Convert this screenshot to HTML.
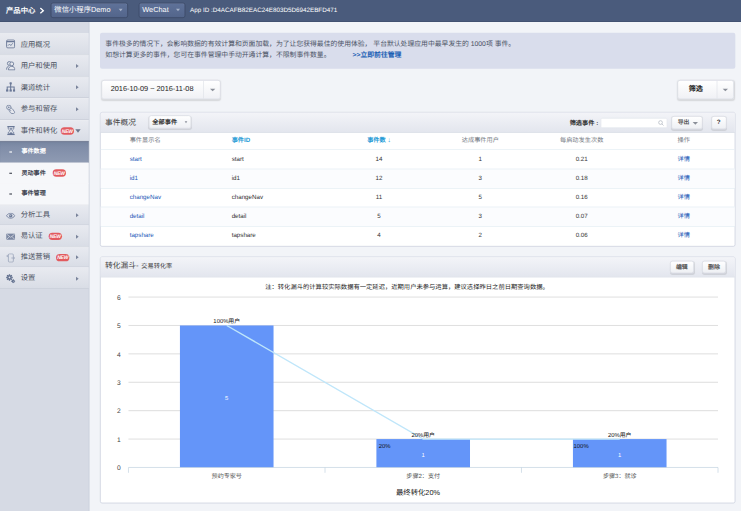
<!DOCTYPE html>
<html lang="zh-CN">
<head>
<meta charset="utf-8">
<title>事件数据</title>
<style>
html,body{margin:0;padding:0;}
body{width:741px;height:511px;overflow:hidden;background:#f2f4f8;font-family:"Liberation Sans",sans-serif;}
#root{text-rendering:geometricPrecision;position:absolute;left:0;top:0;width:1112px;height:767px;transform:scale(0.66667);transform-origin:0 0;background:#f2f4f8;color:#333;font-size:12px;overflow:hidden;}
#root *{box-sizing:border-box;}
.abs{position:absolute;}
/* header */
#hdr{position:absolute;left:0;top:0;width:1112px;height:33px;background:#4a5b7c;border-bottom:1px solid #3f4e6c;}
#hdr .crumb{position:absolute;left:9px;top:8px;color:#fff;font-weight:bold;font-size:11px;line-height:16px;white-space:nowrap;}
.hsel{position:absolute;top:3.5px;height:23px;border:1px solid #3a4763;border-radius:3.5px;background:linear-gradient(#5f7299,#53658b);color:#fff;font-size:11px;line-height:21px;padding-left:5px;white-space:nowrap;box-shadow:inset 0 1px 0 rgba(255,255,255,.15);}
.hsel i{position:absolute;right:7px;top:8.5px;width:0;height:0;border-left:3.5px solid transparent;border-right:3.5px solid transparent;border-top:4px solid #a6b2c8;}
#appid{position:absolute;left:285px;top:9px;color:#fff;font-size:9.45px;line-height:14px;white-space:nowrap;}
/* sidebar */
#side{position:absolute;left:0;top:33px;width:134px;height:734px;background:#d6dae4;border-right:1px solid #c9ceda;}
.mi{position:absolute;left:0;width:133px;background:linear-gradient(#e8eaf0,#d9dde6);border-top:1px solid #f2f3f7;border-bottom:1px solid #c9ced8;color:#4a5160;font-size:11px;}
.mi .t{position:absolute;left:31px;top:0;white-space:nowrap;}
.mi .ar{position:absolute;left:114px;width:0;height:0;border-top:3.7px solid transparent;border-bottom:3.7px solid transparent;border-left:4.3px solid #7a849b;}
.mi .dn{position:absolute;left:113px;width:0;height:0;border-left:4px solid transparent;border-right:4px solid transparent;border-top:5px solid #6c768c;}
.mi svg{position:absolute;left:9px;}
.si{position:absolute;left:0;width:133px;background:#f6f7fa;color:#3f4450;font-size:9.1px;font-weight:bold;}
.si.on{background:linear-gradient(#75849f,#808da8 25%,#8f9bb3);color:#fff;box-shadow:inset 0 1px 1px rgba(60,70,95,.35);}
.si .d{position:absolute;left:13.5px;top:15px;width:4.6px;height:2px;opacity:.85;background:currentColor;font-size:0;overflow:hidden;}
.si .t{position:absolute;left:32.2px;white-space:nowrap;}
.new{position:absolute;width:20px;height:11px;border-radius:6px;background:#e25b5f;color:#fff;font-size:7.5px;font-weight:bold;font-style:italic;line-height:11px;text-align:center;letter-spacing:-0.3px;}
/* main */
#info{position:absolute;left:150px;top:49px;width:953px;height:54px;background:#d9ddec;border-radius:3px;color:#4a5264;font-size:10.24px;line-height:16.6px;padding:10px 0 0 8px;white-space:nowrap;}
#info a{color:#1a5fb4;font-weight:bold;text-decoration:none;margin-left:33px;}
.btn{position:absolute;border:1px solid #d4d8e0;border-radius:4px;background:linear-gradient(#ffffff,#f0f1f5);box-shadow:0 1px 2px rgba(0,0,0,.12);color:#222;white-space:nowrap;}
.panel{position:absolute;left:149.5px;width:953.5px;border:1px solid #c4cad9;border-radius:3px;background:#fff;}
.ph{position:absolute;left:0;top:0;width:951.5px;background:linear-gradient(#f3f4f8,#e3e6ee);border-bottom:1px solid #d0d5e0;}
.ph .ttl{position:absolute;left:7px;font-size:11.6px;line-height:14px;color:#444;white-space:nowrap;}

.caret{position:absolute;width:0;height:0;border-left:3.5px solid transparent;border-right:3.5px solid transparent;border-top:4px solid #8a8f99;}
.vdiv{position:absolute;top:0;width:1px;background:#dfe2e8;}
.sbtn{position:absolute;border:1px solid #d6d9e1;border-radius:4px;background:linear-gradient(#ffffff,#eef0f4);box-shadow:0 1px 1px rgba(0,0,0,.10);color:#333;font-size:10px;font-weight:bold;white-space:nowrap;text-align:center;}
.th{position:absolute;top:30px;height:25px;line-height:22.5px;font-size:9.3px;color:#777c86;white-space:nowrap;}
.th.b{color:#1f9bd6;font-weight:bold;}
.tr{position:absolute;left:0;width:951px;height:28.8px;border-top:1px solid #e3edf3;font-size:9.3px;line-height:27px;color:#333;}
.tr.alt{background:#fbfcfe;}
.tr span{position:absolute;top:0;white-space:nowrap;}
.tr .c{width:100px;margin-left:-50px;text-align:center;}
.tr a{color:#1e5bb8;text-decoration:none;}
.lk{color:#1e5bb8;}
</style>
</head>
<body>
<div id="root">
  <div id="hdr">
    <div class="crumb">产品中心<svg class="abs" style="left:50px;top:3px;" width="8" height="10" viewBox="0 0 8 10"><path d="M1.5 1L6 5L1.5 9" fill="none" stroke="#fff" stroke-width="2"/></svg></div>
    <div class="hsel" style="left:75.5px;width:116px;">微信小程序Demo<i></i></div>
    <div class="hsel" style="left:207.5px;width:70px;">WeChat<i></i></div>
    <div id="appid">App ID :D4ACAFB82EAC24E803D5D6942EBFD471</div>
  </div>
  <div id="side">
    <div class="mi" style="top:16.5px;height:32.5px;line-height:32.5px;"><svg style="left:9px;top:8.5px;" width="14" height="14" viewBox="0 0 14 14" fill="none" stroke="#6a7897" stroke-width="1.4"><rect x="0.9" y="0.9" width="12" height="12" rx="1.8"/><path d="M1 3.3H12.8" stroke-width="1.9"/><path d="M3 9.6L5.3 7L7.2 9.4L10.2 5.8" stroke-width="1.2"/></svg><span class="t">应用概况</span></div>
    <div class="mi" style="top:49.0px;height:32.5px;line-height:32.5px;"><svg style="left:9px;top:8px;" width="14" height="15" viewBox="0 0 14 15" fill="none" stroke="#6a7897" stroke-width="1.3"><circle cx="5" cy="4.2" r="2.9"/><path d="M0.8 13.4C0.8 10.2 2.4 8.6 4.2 8"/><circle cx="8.6" cy="4.8" r="2.9" fill="#e6e8ee"/><path d="M3.6 13.8C3.6 10.4 5.6 8.6 8.6 8.6S13.4 10.4 13.4 13.8Z" fill="#e6e8ee"/></svg><span class="t">用户和使用</span><span class="ar" style="top:12.5px;"></span></div>
    <div class="mi" style="top:81.5px;height:32.5px;line-height:32.5px;"><svg style="left:9px;top:7.5px;" width="14" height="15" viewBox="0 0 14 15" fill="none" stroke="#6a7897" stroke-width="1.5"><rect x="5.3" y="0.3" width="3.4" height="3.4" rx="1" fill="#6a7897" stroke="none"/><path d="M7 3V13M1.8 13V7.4H12.2V13" stroke-width="1.6"/><rect x="0.1" y="11.2" width="3.4" height="3.2" fill="#6a7897" stroke="none"/><rect x="5.3" y="11.2" width="3.4" height="3.2" fill="#6a7897" stroke="none"/><rect x="10.5" y="11.2" width="3.4" height="3.2" fill="#6a7897" stroke="none"/></svg><span class="t">渠道统计</span><span class="ar" style="top:12.5px;"></span></div>
    <div class="mi" style="top:114.0px;height:32.5px;line-height:32.5px;"><svg style="left:9px;top:9px;" width="14" height="14" viewBox="0 0 14 14" fill="none" stroke="#6f7d9b" stroke-width="1.2"><circle cx="4.2" cy="4" r="3.3"/><circle cx="4.2" cy="4" r="1.2" fill="#6f7d9b" stroke="none"/><path d="M6.2 5.4C7.6 4.8 9.2 5.6 10 6.8L12.8 10.8C13.4 12 12.4 13.4 11 13.4L8.6 13.2C7.8 13.2 7 12.6 6.6 11.8L4.8 8.8C4.4 8 5.4 7.2 6.2 7.8L7.4 9.2" fill="#e6e8ee"/></svg><span class="t">参与和留存</span><span class="ar" style="top:12.5px;"></span></div>
    <div class="mi" style="top:146.5px;height:32.5px;line-height:32.5px;"><svg style="left:10px;top:8.5px;" width="13" height="14" viewBox="0 0 13 14" fill="none" stroke="#6a7897" stroke-width="1.3"><path d="M1 1H12M1 13H12" stroke-width="1.9"/><path d="M2.4 1.6V3.8C2.4 5.4 4.8 6 4.8 7S2.4 8.6 2.4 10.2V12.4M10.6 1.6V3.8C10.6 5.4 8.2 6 8.2 7S10.6 8.6 10.6 10.2V12.4"/><path d="M3.6 12.4C3.6 10.2 5.4 9.2 6.5 9.2S9.4 10.2 9.4 12.4Z" fill="#6a7897" stroke="none"/><path d="M4 3.2H9L6.5 6.2Z" fill="#6a7897" stroke="none"/></svg><span class="t">事件和转化</span><span class="new" style="left:91px;top:10px;">NEW</span><span class="dn" style="top:13px;"></span></div>
    <div class="si on" style="top:179.0px;height:32.3px;line-height:31.5px;"><span class="d">-</span><span class="t">事件数据</span></div>
    <div class="si" style="top:210.5px;height:32.3px;line-height:31.5px;"><span class="d">-</span><span class="t">灵动事件</span><span class="new" style="left:79px;top:10px;">NEW</span></div>
    <div class="si" style="top:242.0px;height:32.3px;line-height:31.5px;"><span class="d">-</span><span class="t">事件管理</span></div>
    <div class="mi" style="top:273.5px;height:31.6px;line-height:31.6px;"><svg style="left:9px;top:11px;" width="14" height="10" viewBox="0 0 14 10" fill="none" stroke="#6f7d9b" stroke-width="1.3"><path d="M0.7 4.6C2.4 2 4.8 0.9 7 0.9S11.6 2 13.3 4.6C11.6 7.2 9.2 8.3 7 8.3S2.4 7.2 0.7 4.6Z"/><circle cx="7" cy="4.6" r="2.7" fill="#6f7d9b" stroke="none"/><circle cx="6.2" cy="3.8" r="0.8" fill="#e6e8ee" stroke="none"/></svg><span class="t">分析工具</span><span class="ar" style="top:12.5px;"></span></div>
    <div class="mi" style="top:305.1px;height:31.6px;line-height:31.6px;"><svg style="left:9px;top:11px;" width="14" height="10" viewBox="0 0 14 10" fill="none"><rect x="0.4" y="0.4" width="13.2" height="9.2" rx="1" fill="#7b87a2"/><path d="M1 1.2L7 6L13 1.2M1 9L5 4.8M13 9L9 4.8" stroke="#e6e8ee" stroke-width="1"/></svg><span class="t">易认证</span><span class="new" style="left:73px;top:10px;">NEW</span><span class="ar" style="top:12.5px;"></span></div>
    <div class="mi" style="top:336.7px;height:31.6px;line-height:31.6px;"><svg style="left:9px;top:9px;" width="14" height="14" viewBox="0 0 14 14" fill="none" stroke="#9ca6bb" stroke-width="1.2"><rect x="3.6" y="0.8" width="7.4" height="12.4" rx="1.6"/><path d="M3.4 2.2L1 4L3.4 5.6" /><path d="M8 7H12.6M11 5.2L12.9 7L11 8.8"/></svg><span class="t">推送营销</span><span class="new" style="left:84px;top:10px;">NEW</span><span class="ar" style="top:12.5px;"></span></div>
    <div class="mi" style="top:368.3px;height:31.6px;line-height:31.6px;"><svg style="left:9px;top:9px;" width="14" height="14" viewBox="0 0 14 14" fill="none" stroke="#63718f"><circle cx="5.2" cy="5.2" r="2.5" stroke-width="2.4"/><path d="M5.2 0.3V2M5.2 8.4V10.1M0.3 5.2H2M8.4 5.2H10.1M1.7 1.7L2.9 2.9M7.5 7.5L8.7 8.7M1.7 8.7L2.9 7.5M7.5 2.9L8.7 1.7" stroke-width="2"/><circle cx="10.9" cy="10.9" r="1.5" stroke-width="1.8"/><path d="M10.9 7.9V9M10.9 12.8V13.9M7.9 10.9H9M12.8 10.9H13.9" stroke-width="1.5"/></svg><span class="t">设置</span><span class="ar" style="top:12.5px;"></span></div>
  </div>
  <div id="info">事件极多的情况下，会影响数据的有效计算和页面加载，为了让您获得最佳的使用体验， 平台默认处理应用中最早发生的 1000项 事件。<br>如想计算更多的事件，您可在事件管理中手动开通计算，不限制事件数量。<a>&gt;&gt;立即前往管理</a></div>

  <div class="btn" style="left:152px;top:120px;width:179px;height:28.5px;font-size:11px;line-height:26px;"><span class="abs" style="left:13px;top:0;">2016-10-09 ~ 2016-11-08</span><span class="vdiv" style="left:152px;height:26.5px;"></span><span class="caret" style="left:161.8px;top:11.5px;border-left-width:4.2px;border-right-width:4.2px;border-top-width:4.2px;"></span></div>
  <div class="btn" style="left:1016px;top:120px;width:84.5px;height:28.5px;font-size:10.6px;font-weight:bold;line-height:26px;"><span class="abs" style="left:16px;top:0;">筛选</span><span class="vdiv" style="left:58px;height:26.5px;"></span><span class="caret" style="left:66.5px;top:11.5px;border-left-width:4.2px;border-right-width:4.2px;border-top-width:4.2px;"></span></div>

  <div class="panel" id="p1" style="top:168px;height:202px;">
    <div class="ph" style="height:30px;">
      <span class="ttl" style="top:9px;">事件概况</span>
      <div class="sbtn" style="left:72px;top:4px;width:64px;height:20px;line-height:18px;text-align:left;padding-left:5px;font-size:9.3px;">全部事件<span class="caret" style="left:53px;top:8px;border-left-width:2.5px;border-right-width:2.5px;border-top-width:3px;"></span></div>
      <span class="abs" style="left:704px;top:7.5px;font-size:9.3px;font-weight:bold;color:#333;line-height:14px;white-space:nowrap;">筛选事件 :</span>
      <div class="abs" style="left:750px;top:7.5px;width:100px;height:15px;background:#fff;border:1px solid #e4e7ed;border-radius:2px;"><svg class="abs" style="right:4px;top:2px;" width="9" height="9" viewBox="0 0 9 9"><circle cx="3.8" cy="3.8" r="2.8" fill="none" stroke="#aab0bb" stroke-width="1"/><path d="M5.8 5.8L8.3 8.3" stroke="#aab0bb" stroke-width="1"/></svg></div>
      <div class="sbtn" style="left:856px;top:5px;width:47px;height:19.5px;line-height:17.5px;text-align:left;padding-left:9px;font-size:8.8px;color:#555;">导出<span class="caret" style="left:31px;top:7.5px;border-left-width:4px;border-right-width:4px;border-top-width:4px;"></span></div>
      <div class="sbtn" style="left:916px;top:5px;width:23px;height:19.5px;line-height:17.5px;font-size:9.5px;">?</div>
    </div>
    <span class="th" style="left:44px;">事件显示名</span>
    <span class="th b" style="left:197px;">事件ID</span>
    <span class="th b" style="left:368px;width:100px;text-align:center;">事件数 <span style="font-size:10px;">&#8595;</span></span>
    <span class="th" style="left:520px;width:100px;text-align:center;">达成事件用户</span>
    <span class="th" style="left:672px;width:100px;text-align:center;">每启动发生次数</span>
    <span class="th" style="left:825px;width:100px;text-align:center;">操作</span>
    <div class="tr" style="top:55.0px;"><span class="lk" style="left:44px;">start</span><span style="left:197px;">start</span><span class="c" style="left:418px;">14</span><span class="c" style="left:570px;">1</span><span class="c" style="left:722px;">0.21</span><span class="c lk" style="left:875px;">详情</span></div>
    <div class="tr alt" style="top:83.8px;"><span class="lk" style="left:44px;">id1</span><span style="left:197px;">id1</span><span class="c" style="left:418px;">12</span><span class="c" style="left:570px;">3</span><span class="c" style="left:722px;">0.18</span><span class="c lk" style="left:875px;">详情</span></div>
    <div class="tr" style="top:112.6px;"><span class="lk" style="left:44px;">changeNav</span><span style="left:197px;">changeNav</span><span class="c" style="left:418px;">11</span><span class="c" style="left:570px;">5</span><span class="c" style="left:722px;">0.16</span><span class="c lk" style="left:875px;">详情</span></div>
    <div class="tr alt" style="top:141.4px;"><span class="lk" style="left:44px;">detail</span><span style="left:197px;">detail</span><span class="c" style="left:418px;">5</span><span class="c" style="left:570px;">3</span><span class="c" style="left:722px;">0.07</span><span class="c lk" style="left:875px;">详情</span></div>
    <div class="tr" style="top:170.2px;"><span class="lk" style="left:44px;">tapshare</span><span style="left:197px;">tapshare</span><span class="c" style="left:418px;">4</span><span class="c" style="left:570px;">2</span><span class="c" style="left:722px;">0.06</span><span class="c lk" style="left:875px;">详情</span></div>
  </div>

  <div class="panel" id="p2" style="top:385px;height:370px;">
    <div class="ph" style="height:30px;">
      <span class="ttl" style="top:6px;">转化漏斗- <span style="font-size:9.3px;margin-left:1px;">交易转化率</span></span>
      <div class="sbtn" style="left:854px;top:4.5px;width:36.5px;height:19px;line-height:17px;font-size:8.9px;color:#555;">编辑</div>
      <div class="sbtn" style="left:902.2px;top:4.5px;width:36.7px;height:19px;line-height:17px;font-size:8.9px;color:#555;">删除</div>
    </div>
  </div>
  <svg id="chart" class="abs" style="left:0;top:0;" width="1112" height="767" viewBox="0 0 1112 767" font-family="'Liberation Sans', sans-serif">
  <path d="M192.7 658.6H1077.0" stroke="#cdcdcd" stroke-width="1" fill="none"/>
  <path d="M192.7 616.0H1077.0" stroke="#cdcdcd" stroke-width="1" fill="none"/>
  <path d="M192.7 573.4H1077.0" stroke="#cdcdcd" stroke-width="1" fill="none"/>
  <path d="M192.7 530.8H1077.0" stroke="#cdcdcd" stroke-width="1" fill="none"/>
  <path d="M192.7 488.2H1077.0" stroke="#cdcdcd" stroke-width="1" fill="none"/>
  <path d="M192.7 445.6H1077.0" stroke="#cdcdcd" stroke-width="1" fill="none"/>
  <rect x="269.9" y="488.2" width="140.4" height="213.0" fill="#6495f9"/>
  <rect x="564.6" y="658.6" width="140.4" height="42.6" fill="#6495f9"/>
  <rect x="859.4" y="658.6" width="140.4" height="42.6" fill="#6495f9"/>
  <path d="M192.7 701.2H1077.0" stroke="#c0d0e0" stroke-width="1" fill="none"/>
  <path d="M192.7 701.2v8" stroke="#c0d0e0" stroke-width="1" fill="none"/>
  <path d="M487.5 701.2v8" stroke="#c0d0e0" stroke-width="1" fill="none"/>
  <path d="M782.2 701.2v8" stroke="#c0d0e0" stroke-width="1" fill="none"/>
  <path d="M1077.0 701.2v8" stroke="#c0d0e0" stroke-width="1" fill="none"/>
  <path d="M340.1 488.2L634.8 658.6L929.6 658.6" stroke="#bfe6fa" stroke-width="2" fill="none"/>
  <text x="181" y="705.2" font-size="10" fill="#444" text-anchor="end">0</text>
  <text x="181" y="662.6" font-size="10" fill="#444" text-anchor="end">1</text>
  <text x="181" y="620.0" font-size="10" fill="#444" text-anchor="end">2</text>
  <text x="181" y="577.4" font-size="10" fill="#444" text-anchor="end">3</text>
  <text x="181" y="534.8" font-size="10" fill="#444" text-anchor="end">4</text>
  <text x="181" y="492.2" font-size="10" fill="#444" text-anchor="end">5</text>
  <text x="181" y="449.6" font-size="10" fill="#444" text-anchor="end">6</text>
  <text x="340.1" y="485.2" font-size="8.8" fill="#111" text-anchor="middle">100%用户</text>
  <text x="634.8" y="655.6" font-size="8.8" fill="#111" text-anchor="middle">20%用户</text>
  <text x="929.6" y="655.6" font-size="8.8" fill="#111" text-anchor="middle">20%用户</text>
  <text x="340.1" y="600.2" font-size="8.8" fill="#fff" text-anchor="middle">5</text>
  <text x="634.8" y="685.9" font-size="8.8" fill="#fff" text-anchor="middle">1</text>
  <text x="929.6" y="685.9" font-size="8.8" fill="#fff" text-anchor="middle">1</text>
  <text x="568.1" y="671.6" font-size="8.8" fill="#111">20%</text>
  <text x="860.4" y="671.6" font-size="8.8" fill="#111">100%</text>
  <text x="340.1" y="717.7" font-size="9.1" fill="#555" text-anchor="middle">预约专家号</text>
  <text x="634.8" y="717.7" font-size="9.1" fill="#555" text-anchor="middle">步骤2：支付</text>
  <text x="929.6" y="717.7" font-size="9.1" fill="#555" text-anchor="middle">步骤3：就诊</text>
  <text x="627" y="742.5" font-size="11" fill="#222" text-anchor="middle">最终转化20%</text>
  <text x="610.5" y="434" font-size="9.46" fill="#222" text-anchor="middle">注：转化漏斗的计算较实际数据有一定延迟，近期用户未参与运算，建议选择昨日之前日期查询数据。</text>
  </svg>
</div>
</body>
</html>
